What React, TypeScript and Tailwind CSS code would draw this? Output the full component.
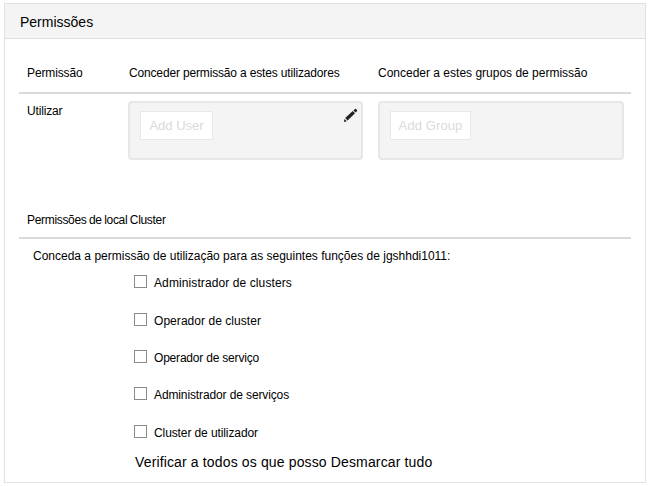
const roles = [
  { label: 'Administrador de clusters', tracking: 'tracking-[0.1px]', height: 'h-[38px]' },
  { label: 'Operador de cluster', tracking: 'tracking-[0.05px]', height: 'h-[37px]' },
  { label: 'Operador de serviço', tracking: 'tracking-[-0.2px]', height: 'h-[37px]' },
  { label: 'Administrador de serviços', tracking: 'tracking-[-0.12px]', height: 'h-[38px]' },
  { label: 'Cluster de utilizador', tracking: 'tracking-[-0.1px]', height: 'h-[29px]' },
];

function Pencil() {
  return (
    <svg width="15" height="15" viewBox="0 0 15 15" className="shrink-0">
      <path d="M0.8 14 L1.5 10.9 L3.9 13.3 Z" fill="#222" />
      <path d="M2.2 10 L9.7 3 L12 5.2 L4.6 12.5 Z" fill="#222" />
      <path d="M10.4 2.4 L12 1 Q12.6 0.5 13.3 1.2 L14 1.9 Q14.4 2.5 13.8 3.2 L12.6 4.5 Z" fill="#222" />
    </svg>
  );
}

export default function App() {
  return (
    <div className="h-[486px] w-[650px] overflow-hidden bg-white pl-1 pt-[3px] font-['Liberation_Sans',Arial,sans-serif] text-[12px] leading-[14px] text-black">
      <section className="h-[480px] w-[642px] border border-[#e1e1e1]">
        <header className="flex h-[35px] items-center border-b border-[#dfdfdf] bg-[#f4f4f4] pl-[15px] pt-px text-[14px] leading-4">
          <h1 className="whitespace-nowrap">Permissões</h1>
        </header>

        <div className="ml-[14px] flex h-[55px] w-[612px] border-b-2 border-[#dadada] pl-2 pt-[27px]">
          <div className="w-[102px] whitespace-nowrap tracking-[-0.12px]">Permissão</div>
          <div className="w-[249px] whitespace-nowrap tracking-[-0.16px]">Conceder permissão a estes utilizadores</div>
          <div className="whitespace-nowrap">Conceder a estes grupos de permissão</div>
        </div>

        <div className="ml-[14px] flex h-[119px] w-[612px] pl-2 pt-[7px]">
          <div className="w-[101px] pt-[3px] tracking-[-0.15px]">Utilizar</div>
          <div className="flex h-[59px] w-[235px] justify-between rounded-[4px] border-2 border-[#e7e7e7] bg-[#f4f4f4] pl-[10px] pr-[3px] pt-2">
            <button className="h-[29px] w-[73px] whitespace-nowrap border border-[#e8e8e8] bg-white pt-px text-[13px] text-[#dadada]">Add User</button>
            <div className="-mt-[3px]"><Pencil /></div>
          </div>
          <div className="ml-[15px] h-[59px] w-[246px] rounded-[4px] border-2 border-[#e7e7e7] bg-[#f4f4f4] pl-[10px] pt-2">
            <button className="block h-[29px] w-[81px] whitespace-nowrap border border-[#e8e8e8] bg-white pt-px text-[13px] tracking-[0.1px] text-[#dadada]">Add Group</button>
          </div>
        </div>

        <h2 className="ml-[14px] h-[26px] w-[612px] whitespace-nowrap border-b-2 border-[#dadada] pl-2 tracking-[-0.32px] [word-spacing:-0.5px]">Permissões de local Cluster</h2>
        <p className="ml-[28px] mt-[10px] h-[26px] whitespace-nowrap">Conceda a permissão de utilização para as seguintes funções de jgshhdi1011:</p>
        <div className="ml-[129px]">
          {roles.map((role) => (
            <label key={role.label} className={`flex items-start ${role.height}`}>
              <input type="checkbox" className="m-0 h-[13px] w-[13px] appearance-none border border-[#8b8b8b] bg-white" />
              <span className={`ml-[7px] mt-px whitespace-nowrap ${role.tracking}`}>{role.label}</span>
            </label>
          ))}
          <div className="ml-px whitespace-nowrap text-[14px] leading-4 tracking-[0.14px]">
            <span>Verificar a todos os que posso</span> <span>Desmarcar tudo</span>
          </div>
        </div>
      </section>
    </div>
  );
}
